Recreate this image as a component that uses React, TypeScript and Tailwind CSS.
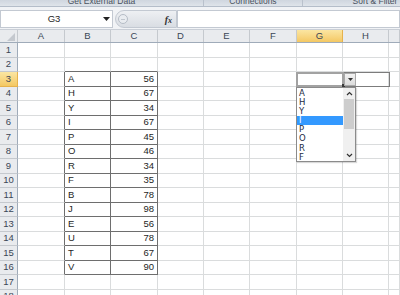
const data: [string, number][] = [
  ["A", 56],
  ["H", 67],
  ["Y", 34],
  ["I", 67],
  ["P", 45],
  ["O", 46],
  ["R", 34],
  ["F", 35],
  ["B", 78],
  ["J", 98],
  ["E", 56],
  ["U", 78],
  ["T", 67],
  ["V", 90],
];

const cols = ["A", "B", "C", "D", "E", "F", "G", "H", ""];
const colW = [
  "w-[47px]",
  "w-[46px]",
  "w-[47px]",
  "w-[46px]",
  "w-[46px]",
  "w-[47px]",
  "w-[46px]",
  "w-[46px]",
  "flex-1",
];

const listItems = ["A", "H", "Y", "I", "P", "O", "R", "F"];

const font = { fontFamily: '"Liberation Sans", Arial, sans-serif' };

function Cell({ row, col }: { row: number; col: number }) {
  // data block sits in B3:C16
  const inData = row >= 3 && row <= 16;
  const dark = inData && (col === 1 || col === 2);
  const darkRight = dark || (inData && col === 0);
  const darkBottom = (row >= 2 && row <= 16) && (col === 1 || col === 2);
  const item = inData ? data[row - 3] : null;

  return (
    <div
      className={`${colW[col]} shrink-0 border-r border-b flex items-center px-[3px] text-[9.5px] text-[#1e1e1e] ${
        darkRight ? "border-r-[#6e6e6e]" : "border-r-[#dadcdd]"
      } ${darkBottom ? "border-b-[#6e6e6e]" : "border-b-[#dadcdd]"} ${
        col === 2 ? "justify-end" : ""
      }`}
    >
      {item && col === 1 && item[0]}
      {item && col === 2 && item[1]}
    </div>
  );
}

function Chevron({ up }: { up?: boolean }) {
  return (
    <svg width="7" height="5" viewBox="0 0 7 5">
      <path
        d={up ? "M1 4 L3.5 1.5 L6 4" : "M1 1 L3.5 3.5 L6 1"}
        fill="none"
        stroke="#333"
        strokeWidth="1.2"
      />
    </svg>
  );
}

export default function App() {
  const rows = Array.from({ length: 18 }, (_, i) => i + 1);

  return (
    <div
      className="relative w-[400px] h-[295px] overflow-hidden bg-white"
      style={font}
    >
      {/* ribbon group labels, mostly cut off */}
      <div className="flex h-[7px] overflow-hidden bg-gradient-to-b from-[#cfd6df] to-[#dfe4ea] border-b border-[#b4bdc9] text-[8.5px] text-[#4a5360]">
        <div className="w-[204px] shrink-0 text-center leading-[10px] -mt-[4px] border-r border-[#b9c1cc]">
          Get External Data
        </div>
        <div className="w-[99px] shrink-0 text-center leading-[10px] -mt-[4px] border-r border-[#b9c1cc]">
          Connections
        </div>
        <div className="w-[144px] shrink-0 text-center leading-[10px] -mt-[4px]">
          Sort &amp; Filter
        </div>
      </div>

      {/* formula bar */}
      <div className="h-[23px] bg-[#f1f3f6] pt-[2px] border-b border-[#c9ced6]">
        <div className="flex h-[18px] mt-[1px]">
          <div className="w-[113px] shrink-0 bg-white border border-[#c3c9d2] flex items-center text-[9.5px] text-[#1e1e1e]">
            <span className="flex-1 text-center pl-[4px]">G3</span>
            <svg width="7" height="4" viewBox="0 0 7 4" className="mr-[2px]">
              <path d="M0 0 H7 L3.5 4 Z" fill="#222" />
            </svg>
          </div>
          <div className="w-[2px] shrink-0" />
          <div className="w-[62px] shrink-0 flex items-center rounded-l-full bg-gradient-to-b from-[#eef0f3] to-[#d9dde3] border border-[#c3c9d2]">
            <div className="ml-[2px] w-[10px] h-[10px] rounded-full border border-[#b5bcc6] bg-[#e9ecf0] flex items-center justify-center">
              <div className="w-[4px] h-[1px] bg-[#c0c6ce]" />
            </div>
            <span
              className="ml-auto mr-[4px] text-[10px] italic font-bold text-[#333]"
              style={{ fontFamily: '"Liberation Serif", serif' }}
            >
              f<span className="text-[8px]">x</span>
            </span>
          </div>
          <div className="flex-1 bg-white border border-[#c3c9d2]" />
        </div>
      </div>

      {/* column headers */}
      <div className="flex h-[13px] bg-[#e9ebee] border-b border-[#9fabb9] text-[9.5px] text-[#3a4656]">
        <div className="w-[18px] shrink-0 border-r border-[#c5c9ce] relative">
          <svg width="8" height="8" viewBox="0 0 8 8" className="absolute right-[2px] bottom-[1px]">
            <polygon points="8,0 8,8 0,8" fill="#c4c8ce" />
          </svg>
        </div>
        {cols.map((c, i) => (
          <div
            key={i}
            className={`${colW[i]} shrink-0 border-r flex items-center justify-center ${
              c === "G"
                ? "bg-gradient-to-b from-[#fbe6a2] to-[#f4c862] border-[#e6b24c]"
                : "border-[#c5c9ce]"
            }`}
          >
            {c}
          </div>
        ))}
      </div>

      {/* grid */}
      {rows.map((r) => (
        <div key={r} className={`flex ${r % 2 === 1 ? "h-[15px]" : "h-[14px]"}`}>
          <div
            className={`w-[18px] shrink-0 border-r border-b flex items-center justify-center text-[9.5px] text-[#3a4656] ${
              r === 3
                ? "bg-gradient-to-b from-[#fbe6a2] to-[#f4c862] border-[#e6b24c]"
                : "bg-[#e9ebee] border-r-[#9fabb9] border-b-[#c5c9ce]"
            }`}
          >
            {r}
          </div>
          {cols.map((_, c) => (
            <Cell key={c} row={r} col={c} />
          ))}
        </div>
      ))}

      {/* G3:H3 outline with in-cell dropdown */}
      <div className="absolute left-[296px] top-[72px] w-[94px] h-[15px] border border-[#7c7c7c]" />
      <div className="absolute left-[296px] top-[72px] w-[48px] h-[15px] border-2 border-[#a2a2a2] bg-white" />
      <div className="absolute left-[342px] top-[84px] w-[3px] h-[3px] bg-[#3a3a3a]" />
      <div className="absolute left-[344px] top-[73px] w-[12px] h-[13px] bg-gradient-to-b from-[#f2f2f2] to-[#dcdcdc] border border-[#a9a9a9] flex items-center justify-center">
        <svg width="5" height="3" viewBox="0 0 5 3">
          <path d="M0 0 H5 L2.5 3 Z" fill="#333" />
        </svg>
      </div>

      {/* validation list */}
      <div className="absolute left-[296px] top-[87px] w-[60px] h-[75px] bg-white border border-[#8b8b8b] shadow-[1px_1px_1px_rgba(0,0,0,0.15)] flex">
        <div className="w-[46px] shrink-0 pt-[1px]">
          {listItems.map((t) => (
            <div
              key={t}
              className={`h-[9.1px] leading-[9.1px] pl-[2px] text-[8.5px] ${
                t === "I" ? "bg-[#3399ff] text-white" : "text-[#1a2a44]"
              }`}
              style={{ fontFamily: '"DejaVu Sans", sans-serif' }}
            >
              {t}
            </div>
          ))}
        </div>
        <div className="flex-1 flex flex-col bg-[#f0f0f0]">
          <div className="h-[11px] flex items-center justify-center">
            <Chevron up />
          </div>
          <div className="h-[30px] mx-[1px] bg-[#cdcdcd]" />
          <div className="flex-1" />
          <div className="h-[11px] flex items-center justify-center">
            <Chevron />
          </div>
        </div>
      </div>
    </div>
  );
}
